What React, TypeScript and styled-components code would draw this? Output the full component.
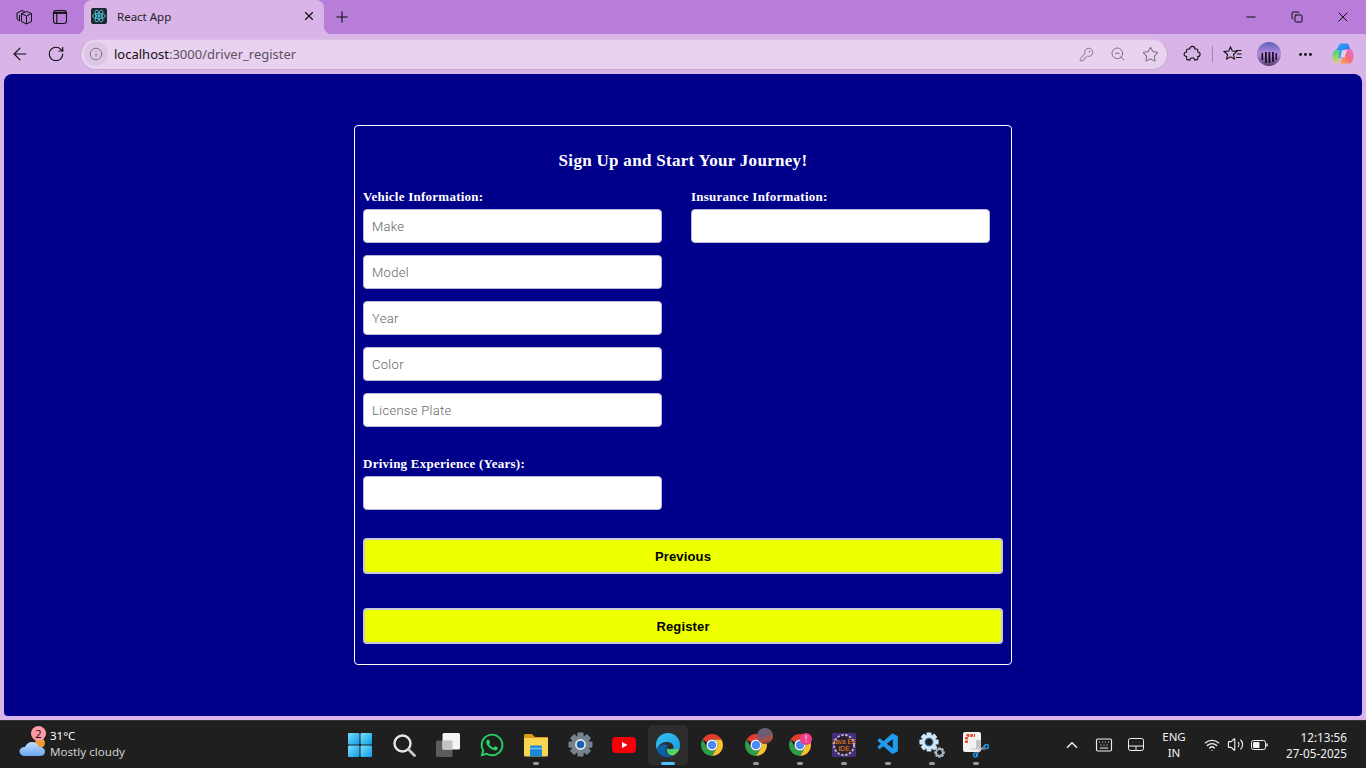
import React from 'react';
import styled, { createGlobalStyle } from 'styled-components';
import {
  ArrowLeft, ChevronUp, Copy, Info, KeyRound, Keyboard, Minus, MoreHorizontal, Plus,
  RotateCw, Star, Volume2, Wifi, X, ZoomOut,
} from 'lucide-react';
import { FaWhatsapp } from 'react-icons/fa';
import { VscVscode } from 'react-icons/vsc';

const GlobalStyle = createGlobalStyle`
  html, body {
    margin: 0;
    height: 100%;
    overflow: hidden;
  }
  * { box-sizing: border-box; }
`;

// --------------  Browser chrome
const Shell = styled.div`
  width: 1366px;
  height: 768px;
  display: flex;
  flex-direction: column;
  background: #d8b4e8;
  font-family: "Noto Sans", "Open Sans", sans-serif;
`;
const TitleBar = styled.div`
  height: 34px;
  flex: none;
  display: flex;
  align-items: stretch;
  background: #b87dd8;
  color: #111;
`;
const TitleIcon = styled.div`
  width: 36px;
  display: flex;
  align-items: center;
  justify-content: center;
`;
const TitleLeft = styled.div`
  display: flex;
  padding-left: 6px;
  width: 84px;
`;
const Tab = styled.div`
  position: relative;
  width: 240px;
  display: flex;
  align-items: center;
  padding: 0 8px 2px 7px;
  background: #d8b4e8;
  border-radius: 8px 8px 0 0;
  &::before, &::after {
    content: '';
    position: absolute;
    bottom: 0;
    width: 8px;
    height: 8px;
  }
  &::before {
    left: -8px;
    background: radial-gradient(circle at 0 0, transparent 8px, #d8b4e8 8.5px);
  }
  &::after {
    right: -8px;
    background: radial-gradient(circle at 100% 0, transparent 8px, #d8b4e8 8.5px);
  }
`;
const TabTitle = styled.span`
  flex: 1;
  margin-left: 10px;
  font-size: 11.5px;
  color: #1f1f1f;
`;
const NewTab = styled.div`
  width: 36px;
  display: flex;
  align-items: center;
  justify-content: center;
`;
const WindowButtons = styled.div`
  margin-left: auto;
  display: flex;
`;
const WindowButton = styled.div`
  width: 46px;
  display: flex;
  align-items: center;
  justify-content: center;
`;
const Toolbar = styled.div`
  height: 40px;
  flex: none;
  display: flex;
  align-items: center;
  color: #111;
  padding-left: 2px;
`;
const NavButton = styled.div`
  width: 36px;
  height: 32px;
  display: flex;
  align-items: center;
  justify-content: center;
`;
const AddressBar = styled.div`
  width: 1088px;
  height: 31px;
  margin-left: 6px;
  padding-right: 1px;
  display: flex;
  align-items: center;
  background: #e8d2f0;
  border: 1px solid #c7a9d4;
  border-top-color: #d8bfe3;
  border-radius: 16px;
  color: #7d7385;
`;
const InfoBadge = styled.div`
  width: 24px;
  height: 24px;
  margin-left: 3px;
  display: flex;
  align-items: center;
  justify-content: center;
  border-radius: 50%;
  background: #dcc6e5;
`;
const Url = styled.div`
  flex: 1;
  margin-left: 6px;
  font-size: 13px;
  color: #5b5162;
  b {
    font-weight: 400;
    color: #111;
  }
`;
const AddressAction = styled.div`
  width: 32px;
  display: flex;
  justify-content: center;
`;
const ToolbarRight = styled.div`
  display: flex;
  align-items: center;
  margin-left: 6px;
`;
const ToolButton = styled.div`
  width: 36px;
  height: 32px;
  display: flex;
  align-items: center;
  justify-content: center;
`;
const CopilotSlot = styled(ToolButton)`
  margin-left: 2px;
`;
const Divider = styled.div`
  width: 1px;
  height: 16px;
  margin: 0 2px;
  background: #9f86aa;
`;

// --------------  Page
const Main = styled.main`
  flex: 1;
  margin: 0 4px;
  padding-top: 51px;
  display: flex;
  justify-content: center;
  align-items: flex-start;
  background: #00008b;
  border-radius: 8px 8px 4px 4px;
`;
const Card = styled.form`
  width: 658px;
  height: 540px;
  padding: 24px 8px 0;
  border: 1px solid #fff;
  border-radius: 4px;
  color: #fff;
`;
const Heading = styled.h2`
  margin: 0 0 17px;
  font: bold 17px/22px "Liberation Serif", serif;
  letter-spacing: 0.3px;
  text-align: center;
`;
const Columns = styled.div`
  display: grid;
  grid-template-columns: 328px 1fr;
`;
const Column = styled.div`
  display: flex;
  flex-direction: column;
`;
const Label = styled.label`
  display: block;
  height: 15px;
  margin-bottom: 5px;
  font: bold 13px/15px "Liberation Serif", serif;
  letter-spacing: 0.25px;
`;
const Field = styled.input`
  display: block;
  width: 299px;
  height: 34px;
  margin-bottom: 12px;
  padding: 0 8px;
  background: #fff;
  border: 1px solid #b9b9d6;
  border-radius: 4px;
  font: 300 13px "Roboto", "Liberation Sans", sans-serif;
  letter-spacing: 0.3px;
  &::placeholder { color: #666; }
`;
const FieldGroup = styled.div`
  margin-top: 17px;
`;
const ActionButton = styled.button`
  display: block;
  width: 640px;
  height: 36px;
  margin-top: ${props => props.$first ? '16px' : '34px'};
  background: #eeff00;
  border: 2px solid #c9c9dd;
  border-radius: 4px;
  color: #000;
  font: bold 13px "Liberation Sans", sans-serif;
  letter-spacing: 0.15px;
`;

// --------------  Taskbar
const Taskbar = styled.footer`
  height: 48px;
  flex: none;
  margin-top: 4px;
  display: grid;
  grid-template-columns: 338px 660px 1fr;
  background: #1f1f1f;
  border-top: 1px solid #35323a;
  color: #fff;
`;
const Weather = styled.div`
  display: flex;
  align-items: center;
  padding-left: 18px;
`;
const WeatherIcon = styled.div`
  position: relative;
  width: 32px;
  height: 32px;
`;
const WeatherBadge = styled.span`
  position: absolute;
  top: -3px;
  left: 13px;
  width: 15px;
  height: 15px;
  border-radius: 50%;
  background: #ff9aa2;
  color: #111;
  font-size: 11px;
  line-height: 15px;
  text-align: center;
`;
const WeatherText = styled.div`
  display: flex;
  flex-direction: column;
  margin-top: -1px;
  font-size: 11.5px;
  line-height: 16px;
  small {
    font-size: 11.6px;
    color: #d0d0d0;
  }
`;
const TaskIcons = styled.div`
  display: flex;
  align-items: center;
`;
const TaskButton = styled.div`
  position: relative;
  width: 44px;
  height: 40px;
  display: flex;
  align-items: center;
  justify-content: center;
  border: solid transparent;
  border-width: 0 2px;
  border-radius: 6px;
  background: ${props => props.$active ? '#2d2d2d' : 'transparent'};
  background-clip: padding-box;
  &::after {
    content: '';
    display: ${props => props.$open || props.$active ? 'block' : 'none'};
    position: absolute;
    bottom: 0;
    left: 50%;
    width: ${props => props.$active ? '14px' : '6px'};
    height: 3px;
    margin-left: ${props => props.$active ? '-7px' : '-3px'};
    border-radius: 2px;
    background: ${props => props.$active ? '#4cc2ff' : '#9a9a9a'};
  }
`;
const AlertBadge = styled.div`
  position: absolute;
  top: 8px;
  right: 8px;
  width: 12px;
  height: 12px;
  border-radius: 50%;
  background: #ee3f8a;
  color: #fff;
  font-size: 8px;
  line-height: 12px;
  text-align: center;
`;
const ProfileBadge = styled.div`
  position: absolute;
  top: 3px;
  right: 3px;
  width: 16px;
  height: 16px;
  border-radius: 50%;
  background: linear-gradient(160deg, #5f6a7c 0%, #6d5a70 45%, #b5503f 70%, #3a3340 100%);
`;
const Tray = styled.div`
  display: flex;
  align-items: center;
  padding-left: 58px;
  color: #f2f2f2;
`;
const TrayButton = styled.div`
  width: 32px;
  display: flex;
  justify-content: center;
`;
const Lang = styled.div`
  width: 44px;
  margin-right: 3px;
  font-size: 11.5px;
  line-height: 16px;
  text-align: center;
`;
const StatusIcons = styled.div`
  display: flex;
  align-items: center;
  gap: 7px;
  width: 72px;
  padding-left: 5px;
`;
const Clock = styled.div`
  margin-left: auto;
  padding-right: 19px;
  font-size: 11.7px;
  line-height: 16px;
  text-align: right;
`;

// --------------  Drawn icons
const ReactFavicon = () => (
  <svg width="16" height="16" viewBox="0 0 16 16">
    <rect width="16" height="16" rx="2" fill="#20262e" />
    <g fill="none" stroke="#4fd1e8" strokeWidth="0.8">
      <ellipse cx="8" cy="8" rx="6.5" ry="2.6" />
      <ellipse cx="8" cy="8" rx="6.5" ry="2.6" transform="rotate(60 8 8)" />
      <ellipse cx="8" cy="8" rx="6.5" ry="2.6" transform="rotate(120 8 8)" />
    </g>
    <circle cx="8" cy="8" r="1.4" fill="#4fd1e8" />
  </svg>
);

const Workspaces = () => (
  <svg width="18" height="18" viewBox="0 0 18 18" fill="none" stroke="currentColor" strokeWidth="1">
    <path d="M6.500 5.500 11.500 3.500 16.500 5.500V13.500L11.500 16 6.500 13.500Z" />
    <path d="M6.500 5.500 11.500 8V16M11.500 8 16.500 5.500" />
    <path d="M4.500 13 2 11V5L7 2.500 9.500 3.500M4.500 13V7" />
  </svg>
);

const VerticalTabs = () => (
  <svg width="16" height="16" viewBox="0 0 16 16" fill="none" stroke="currentColor">
    <rect x="1.500" y="1.500" width="13" height="13" rx="2.500" strokeWidth="1.100" />
    <path d="M1.500 3.800h13" strokeWidth="2.200" />
    <path d="M4.800 4v10" strokeWidth="1.100" />
  </svg>
);

const ExtensionIcon = () => (
  <svg width="18" height="18" viewBox="0 0 20 20" fill="none" stroke="currentColor" strokeWidth="1.200">
    <path d="M7.500 4.500C7.500 2.700 8.800 1.500 10.300 1.500S13.200 2.700 13.200 4.500H15C15.900 4.500 16.500 5.100 16.500 6V7.700C18 7.700 19 8.800 19 10.200S18 12.800 16.500 12.800V15C16.500 15.900 15.900 16.500 15 16.500H12.800C12.800 15 11.700 14.200 10.300 14.200S7.800 15 7.800 16.500H5.500C4.600 16.500 4 15.900 4 15V12.800C2.500 12.800 1.200 11.700 1.200 10.200S2.500 7.700 4 7.700V6C4 5.100 4.600 4.500 5.500 4.500Z" />
  </svg>
);

const FavoritesIcon = () => (
  <svg width="20" height="20" viewBox="0 0 20 20" fill="none" stroke="currentColor" strokeWidth="1.100">
    <path d="M7.500 3 9.400 7 13.800 7.500 10.500 10.500 11.400 15 7.500 12.800 3.600 15 4.500 10.500 1.200 7.500 5.600 7Z" />
    <path d="M13 6.500h5.500M14 10h4.500M13 13.500h5.500" />
  </svg>
);

const Avatar = () => (
  <svg width="24" height="24" viewBox="0 0 24 24">
    <defs>
      <linearGradient id="avatarSky" x1="0" y1="0" x2="0" y2="1">
        <stop offset="0" stopColor="#5a62b8" />
        <stop offset="0.5" stopColor="#b98ae0" />
        <stop offset="1" stopColor="#5a3f78" />
      </linearGradient>
    </defs>
    <circle cx="12" cy="12" r="12" fill="url(#avatarSky)" />
    <g fill="#15101f">
      <rect x="4.500" y="11" width="1.600" height="7" />
      <rect x="8" y="10" width="1.800" height="11" />
      <rect x="11.500" y="10" width="1.800" height="11" />
      <rect x="15" y="10" width="1.800" height="10" />
      <rect x="18.500" y="11" width="1.400" height="7" />
    </g>
  </svg>
);

const CopilotIcon = () => (
  <svg width="24" height="24" viewBox="0 0 24 24">
    <defs>
      <linearGradient id="copA" x1="0" y1="0" x2="1" y2="1">
        <stop offset="0" stopColor="#2aa8f5" />
        <stop offset="1" stopColor="#2b6ff0" />
      </linearGradient>
      <linearGradient id="copB" x1="0" y1="1" x2="1" y2="0">
        <stop offset="0" stopColor="#f7b23b" />
        <stop offset="0.5" stopColor="#f56c7e" />
        <stop offset="1" stopColor="#d773ec" />
      </linearGradient>
      <linearGradient id="copC" x1="0" y1="0" x2="0" y2="1">
        <stop offset="0" stopColor="#3fd08a" />
        <stop offset="1" stopColor="#d9dc4a" />
      </linearGradient>
    </defs>
    <path d="M9 1.500h6.500c1.500 0 2.300 1 2.800 2.500L20 10h-6l-2 6H6L4 10z" fill="url(#copA)" />
    <path d="M1.500 13c0-2.500 2-5 4.500-5h3L7 21H5.500C3 21 1.500 17 1.500 13z" fill="url(#copC)" />
    <path d="M14 7h5c2.300 0 3.500 3.500 3.500 7 0 4-2 7.500-4.500 7.500H9l3-7z" fill="url(#copB)" />
    <path d="M11 8h5l-2.500 7.500h-4.500z" fill="#f6ecfb" opacity="0.75" />
  </svg>
);

const CloudIcon = () => (
  <svg width="32" height="32" viewBox="0 0 32 32">
    <defs>
      <linearGradient id="cloudFill" x1="0" y1="0" x2="0" y2="1">
        <stop offset="0" stopColor="#c4dffc" />
        <stop offset="1" stopColor="#6aa6f0" />
      </linearGradient>
    </defs>
    <circle cx="22" cy="14" r="5" fill="#f09a35" />
    <path d="M7 27c-3 0-5.500-2-5.500-4.500S4 18 7 18c1-3 4-5 7-5 3.500 0 6 2 7 5 3-.2 6 1.500 6 4.500S25 27 22 27z" fill="url(#cloudFill)" />
  </svg>
);

const WindowsLogo = () => (
  <svg width="24" height="24" viewBox="0 0 24 24">
    <defs>
      <linearGradient id="winTile" x1="0" y1="0" x2="1" y2="1">
        <stop offset="0" stopColor="#7ce0fb" />
        <stop offset="1" stopColor="#0a9be8" />
      </linearGradient>
    </defs>
    <rect x="0" y="0" width="11.500" height="11.500" rx="1" fill="url(#winTile)" />
    <rect x="12.500" y="0" width="11.500" height="11.500" rx="1" fill="url(#winTile)" />
    <rect x="0" y="12.500" width="11.500" height="11.500" rx="1" fill="url(#winTile)" />
    <rect x="12.500" y="12.500" width="11.500" height="11.500" rx="1" fill="url(#winTile)" />
  </svg>
);

const SearchIcon = () => (
  <svg width="24" height="24" viewBox="0 0 24 24" fill="none">
    <circle cx="10.500" cy="10.500" r="8" stroke="#e6e6e6" strokeWidth="2.400" />
    <path d="M16.500 16.500 22.500 22.500" stroke="#c9c9c9" strokeWidth="2.800" strokeLinecap="round" />
  </svg>
);

const TaskViewIcon = () => (
  <svg width="24" height="24" viewBox="0 0 24 24">
    <rect x="0" y="7.500" width="16.500" height="16.500" rx="1.500" fill="#5c5c5c" />
    <rect x="6.500" y="0" width="17.500" height="16.500" rx="1.500" fill="#f4f4f4" />
    <rect x="6.500" y="7.500" width="10" height="9" fill="#c4c4c4" />
  </svg>
);

const FolderIcon = () => (
  <svg width="26" height="24" viewBox="0 0 26 24">
    <path d="M1 2.500C1 1.500 1.600 1 2.500 1h6.500l3 3h13v4H1z" fill="#d99b14" />
    <path d="M1 5h24v17c0 .8-.6 1.500-1.500 1.500h-21C1.600 23.500 1 22.800 1 22z" fill="#f9d650" />
    <path d="M7 14c0-.8.600-1.500 1.500-1.500h9c.9 0 1.500.7 1.500 1.500v9.500H7z" fill="#1a86d4" />
    <rect x="7" y="14.800" width="12" height="1.600" fill="#6fc0f0" />
  </svg>
);

// a gear made of a ring and rotated teeth
const Gear = ({ size, body, hole, hub }: { size: number; body: string; hole: string; hub?: string }) => (
  <svg width={size} height={size} viewBox="0 0 24 24">
    {[0, 45, 90, 135, 180, 225, 270, 315].map(angle => (
      <rect key={angle} x="9" y="0.500" width="6" height="5" rx="1" fill={body} transform={`rotate(${angle} 12 12)`} />
    ))}
    <circle cx="12" cy="12" r="8.500" fill={body} />
    <circle cx="12" cy="12" r="5.200" fill={hole} />
    {hub && <circle cx="12" cy="12" r="3.600" fill={hub} />}
  </svg>
);

const YouTubeIcon = () => (
  <svg width="24" height="18" viewBox="0 0 24 18">
    <rect width="24" height="16" y="1" rx="4" fill="#f40009" />
    <path d="M10 6l5.500 3-5.500 3z" fill="#fff" />
  </svg>
);

const EdgeIcon = () => (
  <svg width="26" height="26" viewBox="0 0 26 26">
    <defs>
      <linearGradient id="edgeTop" x1="0" y1="0" x2="1" y2="1">
        <stop offset="0" stopColor="#35c1f1" />
        <stop offset="1" stopColor="#1b9de2" />
      </linearGradient>
      <linearGradient id="edgeGreen" x1="0" y1="0" x2="1" y2="1">
        <stop offset="0" stopColor="#2fc27b" />
        <stop offset="1" stopColor="#7be05a" />
      </linearGradient>
    </defs>
    <path d="M13 1C6 1 1 6.500 1 13c0 2 .5 3.500 1 5 1-5 5-8 9.500-8 4 0 6.500 2 7 4.500 .3 1.500-.6 2.500-.6 2.500h6.600C25 15.500 25 14 25 13 25 6.500 20 1 13 1z" fill="url(#edgeTop)" />
    <path d="M2 18c1.500 4.500 6 7 10.500 7 2 0 4-.5 5.500-1.500-4 .5-7.500-1.500-7.500-5.500 0-2 1-3.500 2.500-4.500C8 11 3 14 2 18z" fill="#0c5fa8" />
    <path d="M18 23.500c3-1.500 5.500-4 6.500-6.500H15c-1.500 0-2.500-.5-3-1-1 3 .5 7.500 6 7.500z" fill="url(#edgeGreen)" />
  </svg>
);

const ChromeIcon = () => (
  <svg width="24" height="24" viewBox="0 0 48 48">
    <path d="M5 13A22 22 0 0 1 43.050 13H24A11 11 0 0 0 14.500 18.500Z" fill="#e33b2e" />
    <path d="M43.050 13A22 22 0 0 1 24 46L33.500 29.500A11 11 0 0 0 24 13Z" fill="#fbc02d" />
    <path d="M24 46A22 22 0 0 1 4.950 13L14.500 29.500A11 11 0 0 0 33.500 29.500Z" fill="#2e9e4a" />
    <circle cx="24" cy="24" r="11" fill="#fff" />
    <circle cx="24" cy="24" r="8.500" fill="#4a8af4" />
  </svg>
);

const JavaEeIcon = () => (
  <svg width="24" height="24" viewBox="0 0 24 24">
    <rect width="24" height="24" rx="1" fill="#472d7e" />
    <circle cx="12" cy="12" r="10" fill="#2a2030" stroke="#b9b5bf" strokeWidth="2" strokeDasharray="2.500 1.500" />
    <text x="12" y="11" fontSize="6.500" textAnchor="middle" fill="#f08a1d" fontFamily="Liberation Sans, sans-serif">Java EE</text>
    <text x="12" y="18" fontSize="7" textAnchor="middle" fill="#f08a1d" fontFamily="Liberation Sans, sans-serif">IDE</text>
  </svg>
);

const GearsIcon = () => (
  <svg width="26" height="26" viewBox="0 0 26 26">
    <svg x="0" y="0" width="20" height="20" viewBox="0 0 24 24">
      <Gear size={24} body="#cfe6f7" hole="#2a5a86" hub="#1f1f1f" />
    </svg>
    <svg x="15" y="15" width="11" height="11" viewBox="0 0 24 24">
      <Gear size={24} body="#a9b8c2" hole="#1f1f1f" />
    </svg>
  </svg>
);

const SnipIcon = () => (
  <svg width="26" height="26" viewBox="0 0 26 26">
    <rect x="0" y="0" width="18" height="20" rx="2" fill="#f2f2f2" />
    <path d="M3.500 11V5c0-1 .5-1.500 1.500-1.500h7" fill="none" stroke="#e8402e" strokeWidth="2.800" strokeDasharray="2.500 1" />
    <rect x="13" y="8" width="5" height="9" fill="#c5c5c5" />
    <path d="M13 24 17 17.500 23 13M8 17h14" fill="none" stroke="#c8c8c8" strokeWidth="1" />
    <circle cx="12.500" cy="23" r="2" fill="none" stroke="#1e8fe0" strokeWidth="1.600" />
    <circle cx="23.500" cy="14.500" r="2" fill="none" stroke="#1e8fe0" strokeWidth="1.600" />
  </svg>
);

const TouchpadIcon = () => (
  <svg width="16" height="14" viewBox="0 0 16 14" fill="none" stroke="currentColor" strokeWidth="1">
    <rect x="0.500" y="0.500" width="15" height="12" rx="2" />
    <path d="M0.500 8h15M8 8v5" />
  </svg>
);

const BatteryIcon = () => (
  <svg width="17" height="12" viewBox="0 0 17 12" fill="none" stroke="currentColor" strokeWidth="1">
    <rect x="0.500" y="1.500" width="14" height="9" rx="2" />
    <rect x="2" y="3" width="6.500" height="6" rx="1" fill="currentColor" stroke="none" />
    <path d="M16 4.500v3" strokeWidth="1.400" />
  </svg>
);

export default function App() {
  return (
    <Shell>
      <GlobalStyle />
      <TitleBar>
        <TitleLeft>
          <TitleIcon><Workspaces /></TitleIcon>
          <TitleIcon><VerticalTabs /></TitleIcon>
        </TitleLeft>
        <Tab>
          <ReactFavicon />
          <TabTitle>React App</TabTitle>
          <X size={14} strokeWidth={2} />
        </Tab>
        <NewTab><Plus size={18} strokeWidth={1.500} /></NewTab>
        <WindowButtons>
          <WindowButton><Minus size={14} strokeWidth={1.800} /></WindowButton>
          <WindowButton><Copy size={12} strokeWidth={2} /></WindowButton>
          <WindowButton><X size={16} strokeWidth={1.500} /></WindowButton>
        </WindowButtons>
      </TitleBar>

      <Toolbar>
        <NavButton><ArrowLeft size={20} strokeWidth={1.400} /></NavButton>
        <NavButton><RotateCw size={18} strokeWidth={1.500} /></NavButton>
        <AddressBar>
          <InfoBadge><Info size={14} strokeWidth={1.700} /></InfoBadge>
          <Url><b>localhost</b>:3000/driver_register</Url>
          <AddressAction><KeyRound size={15} strokeWidth={1.500} /></AddressAction>
          <AddressAction><ZoomOut size={16} strokeWidth={1.500} /></AddressAction>
          <AddressAction><Star size={17} strokeWidth={1.500} /></AddressAction>
        </AddressBar>
        <ToolbarRight>
          <ToolButton><ExtensionIcon /></ToolButton>
          <Divider />
          <ToolButton><FavoritesIcon /></ToolButton>
          <ToolButton><Avatar /></ToolButton>
          <ToolButton><MoreHorizontal size={17} strokeWidth={2.200} /></ToolButton>
          <CopilotSlot><CopilotIcon /></CopilotSlot>
        </ToolbarRight>
      </Toolbar>

      <Main>
        <Card>
          <Heading>Sign Up and Start Your Journey!</Heading>
          <Columns>
            <Column>
              <Label>Vehicle Information:</Label>
              <Field placeholder="Make" />
              <Field placeholder="Model" />
              <Field placeholder="Year" />
              <Field placeholder="Color" />
              <Field placeholder="License Plate" />
              <FieldGroup>
                <Label>Driving Experience (Years):</Label>
                <Field />
              </FieldGroup>
            </Column>
            <Column>
              <Label>Insurance Information:</Label>
              <Field />
            </Column>
          </Columns>
          <ActionButton type="button" $first>Previous</ActionButton>
          <ActionButton type="button">Register</ActionButton>
        </Card>
      </Main>

      <Taskbar>
        <Weather>
          <WeatherIcon>
            <CloudIcon />
            <WeatherBadge>2</WeatherBadge>
          </WeatherIcon>
          <WeatherText>
            31°C
            <small>Mostly cloudy</small>
          </WeatherText>
        </Weather>
        <TaskIcons>
          <TaskButton><WindowsLogo /></TaskButton>
          <TaskButton><SearchIcon /></TaskButton>
          <TaskButton><TaskViewIcon /></TaskButton>
          <TaskButton><FaWhatsapp size={26} color="#25d366" /></TaskButton>
          <TaskButton $open><FolderIcon /></TaskButton>
          <TaskButton><Gear size={25} body="#76838f" hole="#e8e8e8" hub="#1a5fb0" /></TaskButton>
          <TaskButton><YouTubeIcon /></TaskButton>
          <TaskButton $active><EdgeIcon /></TaskButton>
          <TaskButton><ChromeIcon /></TaskButton>
          <TaskButton $open>
            <ChromeIcon />
            <ProfileBadge />
          </TaskButton>
          <TaskButton $open>
            <ChromeIcon />
            <AlertBadge>!</AlertBadge>
          </TaskButton>
          <TaskButton $open><JavaEeIcon /></TaskButton>
          <TaskButton $open><VscVscode size={25} color="#1f9cf0" /></TaskButton>
          <TaskButton $open><GearsIcon /></TaskButton>
          <TaskButton $open><SnipIcon /></TaskButton>
        </TaskIcons>
        <Tray>
          <TrayButton><ChevronUp size={18} strokeWidth={2} /></TrayButton>
          <TrayButton><Keyboard size={18} strokeWidth={1.500} /></TrayButton>
          <TrayButton><TouchpadIcon /></TrayButton>
          <Lang>ENG<br />IN</Lang>
          <StatusIcons>
            <Wifi size={16} strokeWidth={2} />
            <Volume2 size={17} strokeWidth={1.600} />
            <BatteryIcon />
          </StatusIcons>
          <Clock>12:13:56<br />27-05-2025</Clock>
        </Tray>
      </Taskbar>
    </Shell>
  );
}
